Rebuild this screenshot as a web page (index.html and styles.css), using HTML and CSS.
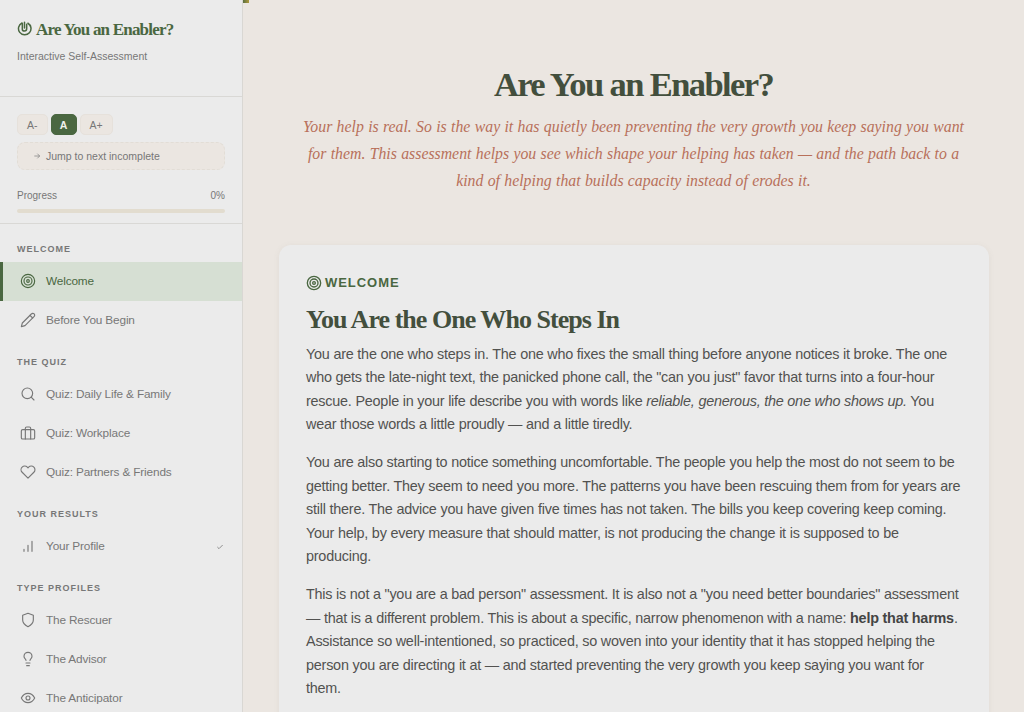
FILE: index.html
```html
<!DOCTYPE html>
<html lang="en">
<head>
<meta charset="utf-8">
<title>Are You an Enabler?</title>
<link rel="stylesheet" href="styles.css">
</head>
<body>
<div class="app">
  <aside class="sidebar">
    <header class="brand">
      <h1 class="brand-title"><svg class="brand-icon" viewBox="0 0 24 24"><path d="M8 3.200a10 10 0 1 0 9.500.4"/><path d="M8.500 13V4M12 11V2M15.500 12V5M8.500 13c0 1.800 1.500 3 3.500 3s3.500-1.500 3.500-4"/></svg>Are You an Enabler?</h1>
      <p class="brand-sub">Interactive Self-Assessment</p>
    </header>
    <section class="controls">
      <div class="font-btns">
        <button class="fbtn">A-</button>
        <button class="fbtn active">A</button>
        <button class="fbtn">A+</button>
      </div>
      <button class="jump"><svg class="jump-arrow" viewBox="0 0 24 24"><path d="M4 12h16M13 5l7 7-7 7"/></svg>Jump to next incomplete</button>
      <div class="progress-row"><span>Progress</span><span>0%</span></div>
      <div class="progress-track"></div>
    </section>
    <nav class="nav">
      <div class="nav-label">WELCOME</div>
      <a class="nav-item current"><svg class="ico" viewBox="0 0 24 24"><circle cx="12" cy="12" r="10"/><circle cx="12" cy="12" r="6"/><circle cx="12" cy="12" r="2"/></svg>Welcome</a>
      <a class="nav-item"><svg class="ico" viewBox="0 0 24 24"><path d="M17 3a2.850 2.830 0 1 1 4 4L7.500 20.500 2 22l1.500-5.500Z"/><path d="m15 5 4 4"/></svg>Before You Begin</a>
      <div class="nav-label spaced">THE QUIZ</div>
      <a class="nav-item"><svg class="ico" viewBox="0 0 24 24"><circle cx="11" cy="11" r="8"/><path d="m21 21-4.300-4.300"/></svg>Quiz: Daily Life &amp; Family</a>
      <a class="nav-item"><svg class="ico" viewBox="0 0 24 24"><rect x="2" y="7" width="20" height="14" rx="2"/><path d="M16 21V5a2 2 0 0 0-2-2h-4a2 2 0 0 0-2 2v16"/></svg>Quiz: Workplace</a>
      <a class="nav-item"><svg class="ico" viewBox="0 0 24 24"><path d="M20.800 4.600a5.500 5.500 0 0 0-7.800 0L12 5.700l-1-1.100a5.500 5.500 0 0 0-7.800 7.800L12 21.200l8.800-8.800a5.500 5.500 0 0 0 0-7.800Z"/></svg>Quiz: Partners &amp; Friends</a>
      <div class="nav-label spaced">YOUR RESULTS</div>
      <a class="nav-item"><svg class="ico" viewBox="0 0 24 24"><path d="M18 20V5M12 20V11M6 20v-3"/></svg>Your Profile<svg class="check" viewBox="0 0 24 24"><path d="M20 6 9 17l-5-5"/></svg></a>
      <div class="nav-label spaced">TYPE PROFILES</div>
      <a class="nav-item"><svg class="ico" viewBox="0 0 24 24"><path d="M12 22s8-4 8-10V5l-8-3-8 3v7c0 6 8 10 8 10Z"/></svg>The Rescuer</a>
      <a class="nav-item"><svg class="ico" viewBox="0 0 24 24"><path d="M15 14c.2-1 .7-1.700 1.500-2.500 1-.9 1.500-2.200 1.500-3.500A6 6 0 0 0 6 8c0 1 .2 2.200 1.500 3.500.7.700 1.300 1.500 1.500 2.500"/><path d="M9 18h6M10 22h4"/></svg>The Advisor</a>
      <a class="nav-item"><svg class="ico" viewBox="0 0 24 24"><path d="M2 12s3.500-7 10-7 10 7 10 7-3.500 7-10 7-10-7-10-7Z"/><circle cx="12" cy="12" r="3"/></svg>The Anticipator</a>
    </nav>
  </aside>
  <main class="main">
    <div class="top-progress"></div>
    <header class="hero">
      <h2 class="hero-title">Are You an Enabler?</h2>
      <p class="hero-sub">Your help is real. So is the way it has quietly been preventing the very growth you keep saying you want for them. This assessment helps you see which shape your helping has taken — and the path back to a kind of helping that builds capacity instead of erodes it.</p>
    </header>
    <article class="card">
      <div class="eyebrow"><svg class="eyebrow-ico" viewBox="0 0 24 24"><circle cx="12" cy="12" r="10"/><circle cx="12" cy="12" r="6"/><circle cx="12" cy="12" r="2"/></svg>WELCOME</div>
      <h3 class="card-title">You Are the One Who Steps In</h3>
      <p>You are the one who steps in. The one who fixes the small thing before anyone notices it broke. The one who gets the late-night text, the panicked phone call, the "can you just" favor that turns into a four-hour rescue. People in your life describe you with words like <em>reliable, generous, the one who shows up.</em> You wear those words a little proudly — and a little tiredly.</p>
      <p>You are also starting to notice something uncomfortable. The people you help the most do not seem to be getting better. They seem to need you more. The patterns you have been rescuing them from for years are still there. The advice you have given five times has not taken. The bills you keep covering keep coming. Your help, by every measure that should matter, is not producing the change it is supposed to be producing.</p>
      <p>This is not a "you are a bad person" assessment. It is also not a "you need better boundaries" assessment — that is a different problem. This is about a specific, narrow phenomenon with a name: <strong>help that harms</strong>. Assistance so well-intentioned, so practiced, so woven into your identity that it has stopped helping the person you are directing it at — and started preventing the very growth you keep saying you want for them.</p>
    </article>
  </main>
</div>
</body>
</html>
```
FILE: styles.css
```css
* { box-sizing: border-box; }
html, body { margin: 0; height: 712px; overflow: hidden; }
body { background: #ebe6e1; font-family: "Liberation Sans", Arial, sans-serif; color: #4a4a48; }
.app { display: flex; height: 712px; overflow: hidden; }
.sidebar { width: 243px; flex: none; height: 712px; background: #ebebeb; border-right: 1px solid #d9d7d3; overflow: hidden; }
.brand { height: 97px; padding: 20px 17px 0; border-bottom: 1px solid #d9d8d5; }
.brand-title { display: flex; align-items: center; gap: 4px; margin: 0; font: bold 17px/20px "Liberation Serif", serif; letter-spacing: -0.8px; color: #4a6741; }
.brand-icon { width: 15px; height: 15px; fill: none; stroke: #4a6741; stroke-width: 2.4; stroke-linecap: round; margin-top: -3px; }
.brand-sub { margin: 9px 0 0; font-size: 10.5px; line-height: 14px; color: #777; }
.controls { height: 127px; padding: 17px 17px 0; border-bottom: 1px solid #d9d8d5; }
.font-btns { display: flex; gap: 3px; }
.fbtn { height: 21px; padding: 0 9px; border: 1px solid #e6e1db; border-radius: 5px; background: #ebe6e1; color: #777; font: 10.5px "Liberation Sans", sans-serif; }
.fbtn.active { width: 26px; padding: 0; background: #4a6741; border-color: #4a6741; color: #f0f0ec; font-weight: bold; }
.jump { display: flex; align-items: center; width: 208px; height: 28px; margin-top: 7px; padding: 0 15px; border: 1px dashed #e2ddd6; border-radius: 8px; background: #ebe6e1; color: #777; font: 10.5px "Liberation Sans", sans-serif; }
.jump-arrow { width: 8px; height: 8px; margin-right: 5px; fill: none; stroke: #777; stroke-width: 2; }
.progress-row { display: flex; justify-content: space-between; margin-top: 20px; font-size: 10px; line-height: 12px; color: #777; }
.progress-track { height: 4px; margin-top: 7px; border-radius: 2px; background: #e2dccf; }
.nav { padding-top: 19px; }
.nav-label { height: 13px; padding-left: 17px; font-size: 9px; line-height: 13px; font-weight: bold; letter-spacing: 1px; color: #777; }
.nav-label.spaced { margin-top: 16.4px; }
.nav-item { display: flex; align-items: center; height: 39px; padding-left: 20px; font-size: 11.8px; letter-spacing: -0.15px; color: #777; }
.nav-label + .nav-item { margin-top: 5.6px; }
.nav-item.current { background: #d6dfd3; color: #4a6741; border-left: 3px solid #4a6741; padding-left: 17px; }
.ico { width: 16px; height: 16px; flex: none; margin-right: 10px; fill: none; stroke: #777; stroke-width: 1.7; stroke-linecap: round; stroke-linejoin: round; }
.current .ico { stroke: #4a6741; }
.check { width: 8px; height: 8px; margin: 2px 18px 0 auto; fill: none; stroke: #777; stroke-width: 2.4; }
.main { position: relative; flex: 1; min-width: 0; height: 712px; overflow: hidden; padding: 0 36px 0 36px; }
.top-progress { position: absolute; left: -1px; top: 0; width: 7px; height: 3px; background: linear-gradient(90deg, #4a6741, #b09a3c); }
.hero { padding-top: 63px; text-align: center; }
.hero-title { margin: 0; font: bold 34.5px/42px "Liberation Serif", serif; letter-spacing: -1.6px; color: #434f3d; }
.hero-sub { width: 680px; margin: 8px auto 0; font: italic 15.8px/27.2px "Liberation Serif", serif; word-spacing: 0.37px; color: #b8705a; }
.card { width: 710px; margin-top: 50px; padding: 28px 27px 0; background: #ebebeb; border-radius: 12px; box-shadow: 0 1px 6px rgba(120,110,100,.08); height: 600px; }
.eyebrow { display: flex; align-items: center; height: 20px; font-size: 13px; font-weight: bold; letter-spacing: 0.95px; color: #4a6741; }
.eyebrow-ico { width: 16px; height: 16px; margin-right: 3px; fill: none; stroke: #4a6741; stroke-width: 2; }
.card-title { margin: 9px 0 5px; font: bold 26px/36px "Liberation Serif", serif; letter-spacing: -0.96px; color: #434f3d; }
.card p { margin: 0 0 14.6px; font-size: 14.4px; letter-spacing: -0.22px; line-height: 23.5px; color: #525250; }
.card strong { color: #444; }
```
